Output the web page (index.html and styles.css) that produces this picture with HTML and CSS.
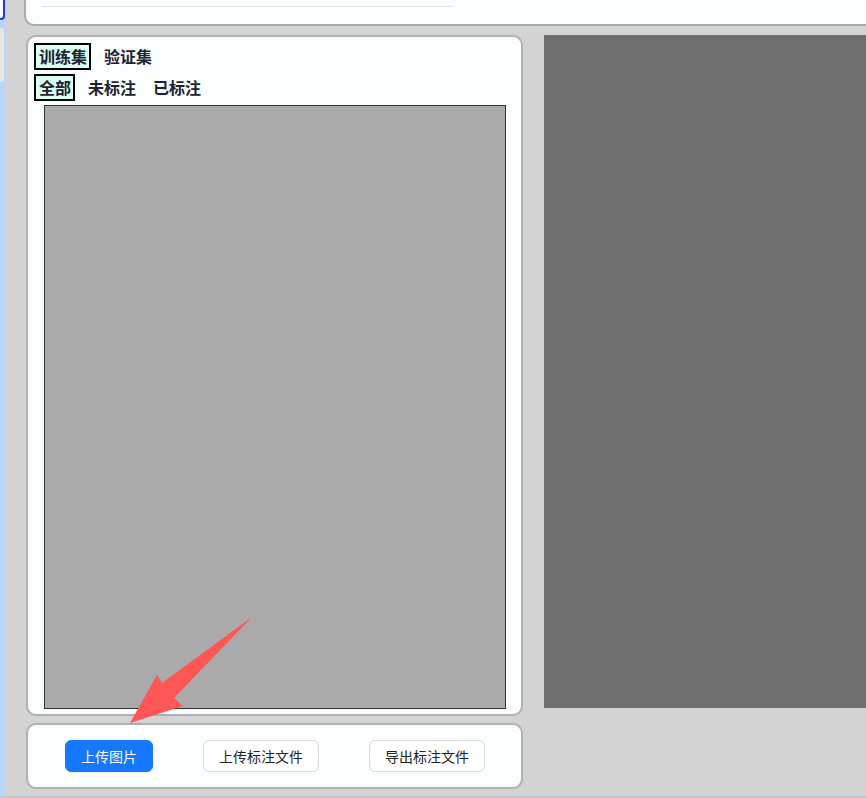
FILE: index.html
```html
<!DOCTYPE html>
<html lang="zh-CN">
<head>
<meta charset="utf-8">
<title>标注</title>
<link rel="stylesheet" href="styles.css">
</head>
<body>
<div class="app">
  <aside class="rail">
    <div class="rail-top"></div>
    <div class="rail-item"></div>
  </aside>
  <main class="main">
    <header class="topbar"><div class="topline"></div></header>
    <div class="content">
      <div class="left-col">
        <section class="panel list-panel">
          <div class="tabs">
            <span class="tab active">训练集</span>
            <span class="tab">验证集</span>
          </div>
          <div class="tabs">
            <span class="tab active">全部</span>
            <span class="tab">未标注</span>
            <span class="tab">已标注</span>
          </div>
          <div class="preview"></div>
        </section>
        <section class="panel actions">
          <button class="btn primary">上传图片</button>
          <button class="btn">上传标注文件</button>
          <button class="btn">导出标注文件</button>
        </section>
      </div>
      <div class="canvas"></div>
    </div>
  </main>
  <svg class="arrow" width="866" height="798" viewBox="0 0 866 798" aria-hidden="true">
    <polygon points="252,617 174,698 183,706 130,723 157,675 162,683" fill="#fe5555"/>
  </svg>
</div>
</body>
</html>
```
FILE: styles.css
```css
* { box-sizing: border-box; }
html, body { margin: 0; padding: 0; }
body {
  font-family: "Noto Sans CJK SC", "Noto Sans", sans-serif;
  background: #d3d3d3;
  overflow: hidden;
}
.app {
  position: relative;
  display: flex;
  width: 866px;
  height: 798px;
  border-bottom: 2px solid #c3c9d2;
  background: #d3d3d3;
}
.rail {
  width: 6px;
  flex: none;
  background: #b9d5f7;
  display: flex;
  flex-direction: column;
}
.rail-top {
  height: 20px;
  width: 6px;
  background: #fff;
  border: 2px solid #1e3cf2;
  border-left: none;
  border-top: none;
  border-bottom-right-radius: 4px;
  margin-left: -1px;
}
.rail-item {
  margin-top: 8px;
  height: 54px;
  width: 4px;
  background: #e7e7e7;
  border-radius: 0 3px 3px 0;
}
.main {
  flex: 1;
  padding-left: 18px;
  display: flex;
  flex-direction: column;
  min-width: 0;
}
.topbar {
  height: 26px;
  margin-right: -20px;
  background: #fbfefe;
  border-left: 2px solid #aaa;
  border-bottom: 2px solid #aaa;
  border-bottom-left-radius: 10px;
  padding: 6px 0 0 16px;
}
.topline {
  width: 411px;
  height: 1px;
  background: #e3e3e3;
}
.content {
  display: flex;
  margin-top: 9px;
  padding-left: 2px;
  gap: 21px;
  align-items: flex-start;
}
.left-col {
  width: 497px;
  flex: none;
  display: flex;
  flex-direction: column;
  gap: 7px;
}
.panel {
  background: #fbfefe;
  border: 2px solid #b0b0b0;
  border-radius: 10px;
}
.list-panel {
  height: 681px;
  padding: 6px 0 0 6px;
}
.tabs {
  display: flex;
  gap: 8px;
  margin-bottom: 4px;
}
.tab {
  display: inline-block;
  border: 2px solid transparent;
  padding: 0 2px 0 3px;
  font-size: 16px;
  line-height: 23px;
  font-weight: 700;
  color: #1d2330;
}
.tab.active {
  border-color: #000;
  background: #dafff5;
}
.preview {
  margin: 0 0 0 10px;
  width: 462px;
  height: 604px;
  background: #aaaaaa;
  border: 1px solid #333;
}
.actions {
  height: 66px;
  display: flex;
  align-items: center;
  justify-content: space-between;
  padding: 0 36px 0 37px;
}
.btn {
  height: 32px;
  padding: 0 15px;
  font-family: inherit;
  font-size: 14px;
  color: #222;
  background: #fff;
  border: 1px solid #d9d9d9;
  border-radius: 6px;
  width: 116px;
}
.btn.primary {
  width: 88px;
  background: #1677ff;
  border-color: #1677ff;
  color: #fff;
}
.canvas {
  flex: 1;
  height: 673px;
  margin-right: -20px;
  background: #6e6e6e;
}
.arrow {
  position: absolute;
  left: 0;
  top: 0;
  pointer-events: none;
}
```
